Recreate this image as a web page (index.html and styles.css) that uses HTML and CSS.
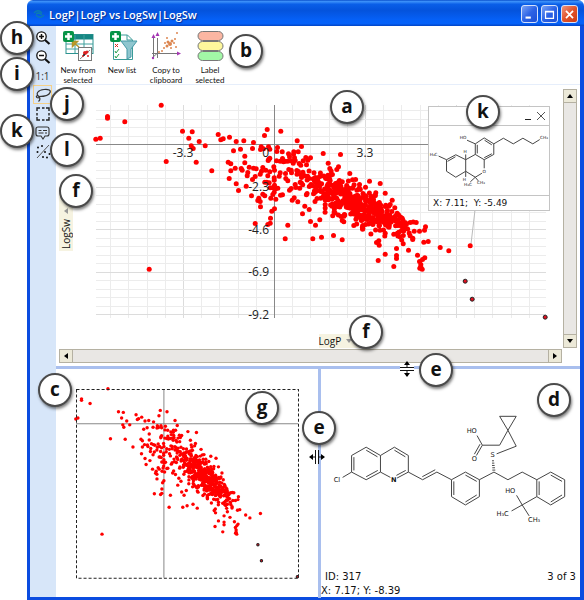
FILE: index.html
```html
<!DOCTYPE html>
<html lang="en">
<head>
  <meta charset="UTF-8">
  <title>LogP | LogP vs LogSw | LogSw</title>
  <link rel="stylesheet" href="styles.css">
</head>
<body>

<div class="window">
  <header class="titlebar">
    <svg class="app-icon" width="12" height="12" viewBox="0 0 12 12">
      <path d="M1 5c2-3 6-3 8 0M11 7c-2 3-6 3-8 0M3 6c2-2 4-1 6 1" fill="none" stroke="#0c7fae" stroke-width="1.3"/>
    </svg>
    <h1>LogP|LogP vs LogSw|LogSw</h1>
    <div class="window-buttons">
      <button class="win-btn" aria-label="Minimize"><svg width="17" height="17" viewBox="0 0 17 17"><path d="M4 12h6" stroke="#fff" stroke-width="2.4"/></svg></button>
      <button class="win-btn" aria-label="Maximize"><svg width="17" height="17" viewBox="0 0 17 17"><path d="M4 5h9v8H4zM4 5.5h9" fill="none" stroke="#fff" stroke-width="1.4"/></svg></button>
      <button class="win-btn win-close" aria-label="Close"><svg width="17" height="17" viewBox="0 0 17 17"><path d="M4.500 4.500l8 8M12.500 4.500l-8 8" stroke="#fff" stroke-width="2"/></svg></button>
    </div>
  </header>

  <div class="window-body">
    <nav class="sidebar">
      <button class="tool" aria-label="Zoom in"><svg width="16" height="16" viewBox="0 0 16 16" fill="none" stroke="#111"><circle cx="6.500" cy="6.500" r="4.700" stroke-width="1.300" fill="#fff"/><path d="M4 6.500h5M6.500 4v5" stroke-width="1.500"/><path d="M10 10l4.500 4" stroke-width="2.200"/></svg></button>
      <button class="tool" aria-label="Zoom out"><svg width="16" height="16" viewBox="0 0 16 16" fill="none" stroke="#111"><circle cx="6.500" cy="6.500" r="4.700" stroke-width="1.300" fill="#fff"/><path d="M4 6.500h5" stroke-width="1.500"/><path d="M10 10l4.500 4" stroke-width="2.200"/></svg></button>
      <button class="tool">1:1</button>
      <button class="tool active" aria-label="Lasso"><svg width="16" height="16" viewBox="0 0 16 16" fill="none" stroke="#333" stroke-width="1.200"><path d="M4 9.500C0 7 3 3 9 2.500c5-.5 7 1 6 3-1 3-6 4-11 4zM4 9.500c-2-2-3.500 0-2 1 1.500.8 3-.5 2-1zM4 10c1.500 1.500 1 3-.5 4.500"/></svg></button>
      <button class="tool" aria-label="Rectangle select"><svg width="16" height="16" viewBox="0 0 16 16" fill="none" stroke="#222"><path d="M2 5V2h3M11 2h3v3M14 11v3h-3M5 14H2v-3M7 2h2.500M7 14h2.500M2 7v2.500M14 7v2.500" stroke-width="1.400"/></svg></button>
      <button class="tool" aria-label="Notes"><svg width="16" height="16" viewBox="0 0 16 16" fill="none" stroke="#333" stroke-width="1.100"><path d="M3 2h9q2 0 2 2v5q0 2-2 2h-2l-2 3-2-3H3q-2 0-2-2V4q0-2 2-2z"/><path d="M3.500 5.500h3M8 5.500h4M3.500 8h5M10 8h2"/></svg></button>
      <button class="tool" aria-label="Trend line"><svg width="16" height="16" viewBox="0 0 16 16"><path d="M2 14L14 1" stroke="#555"/><g fill="#111"><circle cx="3" cy="3.500" r="1"/><circle cx="7" cy="2" r="1"/><circle cx="2.500" cy="8" r="1"/><circle cx="10" cy="8" r="1"/><circle cx="14.500" cy="10" r="1"/><circle cx="8" cy="13" r="1"/><circle cx="12" cy="13.500" r="1"/></g></svg></button>
    </nav>

    <main class="content">
      <div class="toolbar">
        <button class="action">
          <svg width="32" height="30" viewBox="0 0 32 30">
            <rect x="4" y="3.500" width="27" height="19" fill="#fff" stroke="#2c9390"/>
            <rect x="4" y="3.500" width="27" height="5" fill="#168783"/>
            <path d="M4 13h27M4 18h27M13 4v18M22 4v18" stroke="#3ea09d" fill="none"/>
            <rect x="16.500" y="16.500" width="13" height="13" fill="#fff" stroke="#777"/>
            <path d="M18 28l10-9" stroke="#888"/>
            <g fill="#d22"><circle cx="21" cy="25" r="1"/><circle cx="23" cy="22" r="2"/><circle cx="25" cy="21" r="1.500"/><circle cx="26" cy="25" r="1"/></g>
            <circle cx="22" cy="24" r="1" fill="#222"/>
            <path d="M17 16l-5-4M10.500 10.500h5l-5 5z" fill="#c8a422" stroke="#b3952a" stroke-width="1.500"/>
            <rect x="1" y="0" width="11" height="11" rx="2" fill="#079447"/><path d="M6.500 2v7M3 5.500h7" stroke="#fff" stroke-width="2.500"/>
          </svg>
          <span>New from selected</span>
        </button>
        <button class="action">
          <svg width="32" height="30" viewBox="0 0 32 30">
            <path d="M7.500 4h14l5 5v19.500h-19z" fill="#fff" stroke="#3a9b98"/><path d="M21 4v5h5" fill="none" stroke="#3a9b98"/>
            <path d="M9 13l3 3M12 13l-3 3" stroke="#e02818"/>
            <path d="M9 20l1 2 3-4M9 25l1 2 3-4" fill="none" stroke="#25a048"/>
            <path d="M15 10h16l-6 8v8l-4 2V18z" fill="#8fc6cf" stroke="#479aa7"/>
            <rect x="4" y="0" width="11" height="11" rx="2" fill="#079447"/><path d="M9.500 2v7M6 5.500h7" stroke="#fff" stroke-width="2.500"/>
          </svg>
          <span>New list</span>
        </button>
        <button class="action">
          <svg width="32" height="30" viewBox="0 0 32 30">
            <path d="M7.500 7v20M2 22.500h27M2 27l5-4.500" fill="none" stroke="#777"/>
            <path d="M3.500 7v20" stroke="#777"/>
            <g fill="#a437b2"><path d="M1.500 7l2-4 2 4zM5.500 5l2-4 2 4zM27 20.500l4 2-4 2z"/><circle cx="3" cy="27" r="1.200"/></g>
            <g fill="#dc8650"><circle cx="9" cy="21" r="1"/><circle cx="12" cy="20" r="1"/><circle cx="14" cy="17" r="1"/><circle cx="15" cy="12" r="1"/><circle cx="17" cy="15" r="1.500"/><circle cx="18" cy="11" r="1.500"/><circle cx="20" cy="13" r="2"/><circle cx="22" cy="10" r="1.500"/><circle cx="24" cy="12" r="1"/><circle cx="21" cy="17" r="1"/><circle cx="25" cy="8" r="1"/><circle cx="27" cy="2" r="1"/><circle cx="26" cy="16" r="1"/><circle cx="17" cy="7" r="1"/></g>
          </svg>
          <span>Copy to clipboard</span>
        </button>
        <button class="action">
          <svg width="32" height="30" viewBox="0 0 32 30" stroke="#777">
            <rect x="4" y="0.500" width="25" height="9" rx="4.500" fill="#fbb6a2"/>
            <rect x="4" y="10.500" width="25" height="9" rx="4.500" fill="#fdf79c"/>
            <rect x="4" y="20.500" width="25" height="9" rx="4.500" fill="#a2f7a6"/>
          </svg>
          <span>Label selected</span>
        </button>
      </div>

      <section class="plot-pane">
        <button class="axis-name axis-y">LogSw <i class="caret"></i></button>
        <div class="plot">
          <svg id="plot" viewBox="0 0 450 213"></svg>
        </div>
        <button class="axis-name axis-x">LogP <i class="caret"></i></button>
        <div class="scrollbar vertical">
          <button aria-label="Up"><svg width="8" height="8" viewBox="0 0 8 8"><path d="M1 6l3-4 3 4z"/></svg></button>
          <button aria-label="Down"><svg width="8" height="8" viewBox="0 0 8 8"><path d="M1 2l3 4 3-4z"/></svg></button>
        </div>
        <div class="scrollbar horizontal">
          <button aria-label="Left"><svg width="8" height="8" viewBox="0 0 8 8"><path d="M6 1L2 4l4 3z"/></svg></button>
          <button aria-label="Right"><svg width="8" height="8" viewBox="0 0 8 8"><path d="M2 1l4 3-4 3z"/></svg></button>
        </div>

        <aside class="note">
          <div class="note-head">
            <button aria-label="Minimize note"><svg width="8" height="10" viewBox="0 0 8 10"><path d="M1 8.500h6" stroke="#222"/></svg></button>
            <button aria-label="Close note"><svg width="10" height="10" viewBox="0 0 10 10"><path d="M1 1l8 8M9 1L1 9" stroke="#555"/></svg></button>
          </div>
          <svg class="note-mol" viewBox="23 104 363 210">
            <g class="bonds">
              <path d="M163 158L190 140L219 158V190L190 206L163 190ZM138 147L163 158M219 158L248 141L278 158L307 141L337 158L358 145"/>
              <path d="M169 161V187M191 147L213 161M213 188L190 200"/>
              <path d="M163 190L134 206V241L163 259L183 247M190 232V206M134 206L104 191L76 206V241L104 259L134 241M103 197L79 211M52 195L76 206M134 206V190M134 241V258M163 259L148 273M163 259L172 270"/>
            </g>
            <g class="atoms">
              <text x="126" y="144">HO</text><text x="371" y="144">CH₃</text><text x="37" y="194">H₃C</text><text x="132" y="186">H</text>
              <text x="130" y="270">H</text><text x="190" y="245">O</text><text x="141" y="285">H₃C</text><text x="180" y="281">CH₃</text>
            </g>
          </svg>
          <div class="note-foot">X: 7.11; &nbsp;Y: -5.49</div>
        </aside>
      </section>

      <div class="lower">
        <section class="overview">
          <svg id="overview" viewBox="0 0 221 188"></svg>
        </section>
        <section class="details">
          <svg class="molecule" viewBox="60 40 720 340">
            <g class="bonds">
              <path d="M122 168L166 143L209 168V218L166 241L122 218ZM209 168L251 143L293 168V218L259 236M239 234L209 218M95 234L122 218"/>
              <path d="M129 173V213M166 152L200 172M201 213L166 232M251 152L284 172M285 213L257 228"/>
              <path d="M293 218L336 241L379 218L423 241M335 232L374 211"/>
              <path d="M423 241L465 218L507 241V292L465 317L423 292ZM430 246V287M465 227L499 246M499 287L465 308"/>
              <path d="M507 241L551 218L593 241L636 218L680 241L722 218L764 241V292L722 317L680 292V241"/>
              <path d="M687 246V287M722 227L756 246M756 287L722 308"/>
              <path d="M680 292L636 317L619 288M636 317L604 335M636 317L657 350"/>
              <path d="M559 163L618 140L593 92L568 50H618L593 92L568 137H516L500 108M516 137L498 168M509 134L492 164"/>
              <path d="M545 184h6M545 191h7M545 198h8M546 205h8M546 212h9"/>
            </g>
            <g class="atoms">
              <text x="78" y="248">Cl</text><text x="249" y="248" class="bold">N</text><text x="547" y="174">S</text><text x="492" y="185">O</text>
              <text x="484" y="101">HO</text><text x="600" y="281">HO</text><text x="577" y="350">H₃C</text><text x="672" y="368">CH₃</text>
            </g>
          </svg>
          <div class="record"><span>ID: 317</span><span>3 of 3</span></div>
          <div class="status">X: 7.17; Y: -8.39</div>
        </section>
      </div>
    </main>
  </div>
</div>

<div class="callouts">
  <b class="callout c-h">h</b>
  <b class="callout c-i">i</b>
  <b class="callout c-b">b</b>
  <b class="callout c-a">a</b>
  <b class="callout c-k">k</b>
  <b class="callout c-j">j</b>
  <b class="callout c-k2">k</b>
  <b class="callout c-l">l</b>
  <b class="callout c-f">f</b>
  <b class="callout c-f2">f</b>
  <b class="callout c-e">e</b>
  <b class="callout c-e2">e</b>
  <b class="callout c-d">d</b>
  <b class="callout c-c">c</b>
  <b class="callout c-g">g</b>
  <svg class="cursor cur-v" width="16" height="16" viewBox="0 0 16 16"><path d="M1 5h14v5H1z" fill="#fff"/><path d="M1 6.500h14M1 9.500h14M8 1v5M8 10v5" stroke="#111" fill="none"/><path d="M5 4l3-4 3 4zM5 12l3 4 3-4z"/></svg>
  <svg class="cursor cur-h" width="16" height="16" viewBox="0 0 16 16"><path d="M5 1h5v14H5z" fill="#fff"/><path d="M6.500 1v14M9.500 1v14M1 8h5M10 8h5" stroke="#111" fill="none"/><path d="M4 5L0 8l4 3zM12 5l4 3-4 3z"/></svg>
</div>

<script src="script.js"></script>
</body>
</html>
```
FILE: styles.css
```css
body {
  margin: 0;
  background: #fff;
  color: #111;
  font-family: "Open Sans", "Noto Sans", sans-serif;
  font-size: 10px;
  position: relative;
}

button {
  margin: 0;
  padding: 0;
  border: none;
  background: none;
  font: inherit;
  color: inherit;
  cursor: pointer;
}

svg {
  display: block;
}

.window {
  margin-left: 27px;
  height: 100vh;
  min-height: 600px;
  display: flex;
  flex-direction: column;
}

/* Title bar */
.titlebar {
  display: flex;
  align-items: center;
  gap: 4px;
  height: 26px;
  box-sizing: border-box;
  padding: 2px 6px 0 6px;
  border-radius: 6px 6px 0 0;
  background: linear-gradient(#0a50cc 0, #3c91fa 6%, #0a5fe8 16%, #0453dc 40%, #0560f6 75%, #0562fa 90%, #0344c4 100%);
}

.titlebar h1 {
  flex: 1;
  margin: 0;
  color: #fff;
  font-size: 11px;
  font-weight: 600;
  text-shadow: 1px 1px 1px #0a2f92;
}

.window-buttons {
  display: flex;
  gap: 3px;
}

.win-btn {
  width: 17px;
  height: 18px;
  box-sizing: border-box;
  border: 1px solid #d6e2fb;
  border-radius: 3px;
  background: linear-gradient(135deg, #7ba3f5, #2c63e6 50%, #1d50d6);
  display: flex;
  align-items: center;
  justify-content: center;
}

.win-close {
  background: linear-gradient(135deg, #f0957c, #e0522b 50%, #cb3c14);
}

.window-body {
  flex: 1;
  display: flex;
  box-sizing: border-box;
  border: solid #0b4ce0;
  border-width: 0 4px 3px 3px;
  min-height: 0;
}

/* Tools on the left */
.sidebar {
  width: 26px;
  flex: none;
  background: #d7e6f9;
  box-sizing: border-box;
  padding: 2px 4px 0 3px;
}

.tool {
  width: 19px;
  height: 19px;
  box-sizing: border-box;
  border: 1px solid transparent;
  display: flex;
  align-items: center;
  justify-content: center;
  color: #333;
}

.tool svg {
  flex: none;
}

.tool.active {
  border: 1px solid #f5d088;
}

.content {
  flex: 1;
  display: flex;
  flex-direction: column;
  min-width: 0;
}

.toolbar {
  height: 59px;
  box-sizing: border-box;
  display: flex;
  align-items: flex-start;
  padding: 5px 0 0 0;
  border-bottom: 1px solid #e6eefb;
}

.action {
  width: 44px;
  display: flex;
  flex-direction: column;
  align-items: center;
  gap: 4px;
  font-family: Lato, sans-serif;
  font-size: 8px;
  line-height: 10px;
}

/* Scatter plot */
.plot-pane {
  position: relative;
  display: grid;
  grid-template-columns: 15px 1fr 14px;
  grid-template-areas:
    "yname plot vscroll"
    "yname xname vscroll"
    "hscroll hscroll .";
  padding: 4px 3px 3px 3px;
}

.plot {
  grid-area: plot;
  padding: 16px 17px 16px 22px;
}

.plot svg,
.overview svg {
  width: 100%;
  overflow: visible;
}

.grid-line {
  stroke: #ececec;
  stroke-width: 1;
}

.grid-line.major {
  stroke: #dcdcdc;
}

.axis {
  stroke: #888;
  stroke-width: 1;
}

.tick {
  font-size: 12px;
  fill: #222;
}

.dot {
  fill: #f00;
}

.dot.selected {
  fill: #e01020;
  stroke: #222;
  stroke-width: 1;
}

.leader {
  stroke: #bbb;
}

.frame {
  fill: none;
  stroke: #222;
  stroke-dasharray: 3 2;
}

.axis-name {
  background: #f6f3e1;
  display: flex;
  align-items: center;
  gap: 5px;
  line-height: 14px;
}

.axis-y {
  grid-area: yname;
  align-self: center;
  justify-self: start;
  writing-mode: vertical-rl;
  transform: rotate(180deg);
  height: 64px;
  width: 14px;
  padding: 2px 0;
}

.axis-x {
  grid-area: xname;
  justify-self: start;
  margin-left: 50%;
  height: 14px;
  padding: 0 8px 0 0;
}

.caret {
  width: 0;
  height: 0;
  border: 3px solid transparent;
}

.axis-x .caret {
  border-top: 4px solid #999;
  border-bottom: none;
}

.axis-y .caret {
  border-right: none;
  border-left: 4px solid #999;
}

.scrollbar {
  display: flex;
  justify-content: space-between;
  box-sizing: border-box;
  border: 1px solid #b5b1a2;
  background: #e9e7e4;
}

.scrollbar button {
  width: 12px;
  height: 12px;
  background: #ece9d8;
  display: flex;
  align-items: center;
  justify-content: center;
  outline: 1px solid #b5b1a2;
}

.vertical {
  grid-area: vscroll;
  flex-direction: column;
}

.horizontal {
  grid-area: hscroll;
  height: 14px;
  margin: 1px 1px 0 0;
}

/* Structure note over the plot */
.note {
  position: absolute;
  top: 21px;
  right: 30px;
  width: 122px;
  box-sizing: border-box;
  border: 1px solid #c4c4c4;
  background: #fff;
}

.note-head {
  height: 19px;
  box-sizing: border-box;
  border-bottom: 1px solid #c4c4c4;
  display: flex;
  justify-content: flex-end;
  align-items: center;
  gap: 4px;
  padding-right: 3px;
}

.note-mol {
  width: 100%;
}

.note-foot {
  border-top: 1px solid #c4c4c4;
  padding-left: 4px;
  font-family: "DejaVu Sans", sans-serif;
  font-size: 9px;
  line-height: 14px;
}

.bonds {
  fill: none;
  stroke: #444;
  stroke-width: 3;
}

.atoms {
  font-family: "DejaVu Sans", sans-serif;
  font-size: 20px;
  text-anchor: middle;
  fill: #111;
}

.note-mol .atoms {
  font-size: 13px;
}

.bold {
  font-weight: bold;
}

/* Lower panes */
.lower {
  flex: 1;
  display: grid;
  grid-template-columns: 1fr 1fr;
  border-top: 3px solid #a9bfee;
  min-height: 0;
}

.overview {
  padding: 20px;
}

.details {
  display: flex;
  flex-direction: column;
  border-left: 3px solid #a9bfee;
  font-family: "DejaVu Sans", sans-serif;
  font-size: 10px;
}

.molecule {
  margin: 44px 10px auto;
}

.record {
  display: flex;
  justify-content: space-between;
  padding: 0 4px;
  line-height: 14px;
}

.status {
  line-height: 14px;
}

/* Lettered callouts */
.callouts {
  position: absolute;
  top: 0;
  left: 0;
}

.callout {
  position: absolute;
  width: 34px;
  height: 34px;
  box-sizing: border-box;
  border: 2px solid #4a4a4a;
  border-radius: 50%;
  background: #fff;
  box-shadow: 1px 2px 3px rgba(0, 0, 0, 0.5);
  font-size: 19px;
  line-height: 28px;
  text-align: center;
}

.c-h { left: 0; top: 21px; }
.c-i { left: 0; top: 57px; }
.c-b { left: 229px; top: 34px; }
.c-a { left: 330px; top: 90px; }
.c-k { left: 466px; top: 95px; }
.c-j { left: 50px; top: 87px; }
.c-k2 { left: 0; top: 114px; }
.c-l { left: 50px; top: 133px; }
.c-f { left: 59px; top: 174px; }
.c-f2 { left: 349px; top: 315px; }
.c-e { left: 419px; top: 353px; }
.c-e2 { left: 302px; top: 411px; }
.c-d { left: 537px; top: 383px; }
.c-c { left: 38px; top: 373px; }
.c-g { left: 245px; top: 391px; }

.cursor {
  position: absolute;
}

.cur-v { left: 399px; top: 361px; }
.cur-h { left: 309px; top: 449px; }
```
FILE: script.js
```js
const NS = 'http://www.w3.org/2000/svg';

// compounds as x,y pairs, measured from ORIGIN in thirds of a plot unit
const ORIGIN = [223, 163];
const points = [
  [-117,45],[-278,79],[-278,84],[-226,95],[-313,147],[-300,144],[-53,123],[-24,125],[-34,144],[-3,154],
  [-27,167],[-21,175],[-102,214],[-12,216],[-153,537],[15,167],[54,133],[62,149],[69,146],[88,141],
  [108,154],[131,152],[160,157],[157,175],[193,136],[201,118],[242,123],[291,152],[304,169],[100,182],
  [121,177],[134,198],[183,170],[181,178],[190,176],[205,170],[209,177],[232,172],[35,242],[84,216],
  [92,221],[92,242],[87,265],[105,234],[123,235],[126,240],[134,218],[147,231],[143,247],[141,257],
  [160,234],[168,236],[188,232],[184,243],[180,252],[165,259],[157,268],[108,281],[115,301],[138,288],
  [154,317],[176,324],[173,331],[180,334],[181,350],[188,312],[194,317],[165,400],[203,403],
  [210,399],[211,384],[215,363],[223,356],[263,405],[255,446],[338,446],[364,441],[400,436],[426,449],
  [346,405],[331,394],[359,389],[307,371],[327,358],[314,348],[293,335],[276,330],[282,323],[194,276],
  [200,276],[207,278],[204,211],[209,204],[206,207],[221,230],[223,240],[209,245],[203,257],[197,240],
  [230,184],[246,185],[229,212],[240,213],[247,205],[250,215],[237,258],[240,248],[256,250],[257,265],
  [263,272],[222,263],[222,270],[218,293],[226,296],[233,294],[222,306],[218,313],[212,324],[227,327],
  [241,315],[247,314],[210,293],[223,285],[268,300],[273,295],[285,283],[287,292],[281,185],[294,185],
  [280,192],[265,191],[268,200],[283,203],[263,213],[273,212],[285,211],[279,219],[297,220],[255,213],
  [266,238],[274,248],[273,240],[317,202],[323,210],[331,203],[309,212],[302,225],[319,224],[290,241],
  [369,190],[421,193],[384,219],[389,235],[415,230],[410,238],[449,250],[508,273],[540,280],[496,291],
  [527,308],[555,309],[576,330],[584,353],[523,316],[566,348],[606,384],[630,397],[648,397],[676,410],
  [673,420],[658,423],[638,444],[671,456],[684,454],[609,461],[625,480],[652,495],[674,503],[667,508],
  [658,514],[662,523],[659,534],[666,537],[662,530],[589,475],[589,496],[589,505],[581,529],[555,492],
  [534,511],[537,465],[529,457],[536,452],[720,472],[746,482],[810,467],[595,374],[642,423],[616,398]
];
const selected = [[795,573],[816,627],[1035,681]];

// dense middle of the cloud
let seed = 20;
function random() {
  seed = (seed * 16807) % 2147483647;
  return seed / 2147483647;
}
for (let i = 0; i < 430; i++) {
  const t = random() * 0.65 + random() * 0.35;
  const x = 280 + t * 365;
  const spread = 84 - Math.abs(t - 0.45) * 90;
  const y = 256 + t * 172 + (random() + random() - 1) * spread;
  points.push([x, y]);
}

function add(parent, name, attrs, text) {
  const el = document.createElementNS(NS, name);
  for (const key in attrs) el.setAttribute(key, attrs[key]);
  if (text) el.textContent = text;
  parent.appendChild(el);
}

function drawDots(svg, ox, oy, sx, sy, r) {
  const dot = (p, cls, radius) => add(svg, 'circle', {
    cx: (ox + (p[0] - ORIGIN[0]) * sx).toFixed(1),
    cy: (oy + (p[1] - ORIGIN[1]) * sy).toFixed(1),
    r: radius,
    class: cls
  });
  points.forEach(p => dot(p, 'dot', r));
  selected.forEach(p => dot(p, 'dot selected', r - 0.5));
}

function drawPlot() {
  const svg = document.getElementById('plot');
  for (let k = -9; k <= 14; k++) {
    const x = Math.round(178 + k * 18.2) + 0.5;
    add(svg, 'line', { x1: x, x2: x, y1: 0, y2: 213, class: k % 5 ? 'grid-line' : 'grid-line major' });
  }
  for (let k = -4; k <= 20; k++) {
    const y = Math.round(39 + k * 8.5) + 0.5;
    add(svg, 'line', { x1: 0, x2: 450, y1: y, y2: y, class: k % 5 ? 'grid-line' : 'grid-line major' });
  }
  add(svg, 'line', { x1: 0, x2: 450, y1: 39.5, y2: 39.5, class: 'axis' });
  add(svg, 'line', { x1: 178.5, x2: 178.5, y1: 0, y2: 213, class: 'axis' });
  add(svg, 'line', { x1: 379, x2: 375, y1: 105, y2: 139, class: 'leader' });
  drawDots(svg, 178.5, 39.5, 1 / 3, 1 / 3, 2.5);

  add(svg, 'text', { x: 87, y: 52, class: 'tick', 'text-anchor': 'middle' }, '-3.3');
  add(svg, 'text', { x: 269, y: 52, class: 'tick', 'text-anchor': 'middle' }, '3.3');
  add(svg, 'text', { x: 173, y: 52, class: 'tick', 'text-anchor': 'end' }, '0');
  ['-2.3', '-4.6', '-6.9', '-9.2'].forEach((label, i) => {
    add(svg, 'text', { x: 173, y: 86 + i * 42.5, class: 'tick', 'text-anchor': 'end' }, label);
  });
}

function drawOverview() {
  const svg = document.getElementById('overview');
  add(svg, 'line', { x1: 0, x2: 221, y1: 34.5, y2: 34.5, class: 'axis' });
  add(svg, 'line', { x1: 87.5, x2: 87.5, y1: 0, y2: 188, class: 'axis' });
  drawDots(svg, 87.5, 34.5, 0.1637, 0.2942, 1.7);
  add(svg, 'rect', { x: 0.5, y: 0.5, width: 221, height: 188, class: 'frame' });
}

drawPlot();
drawOverview();
```
